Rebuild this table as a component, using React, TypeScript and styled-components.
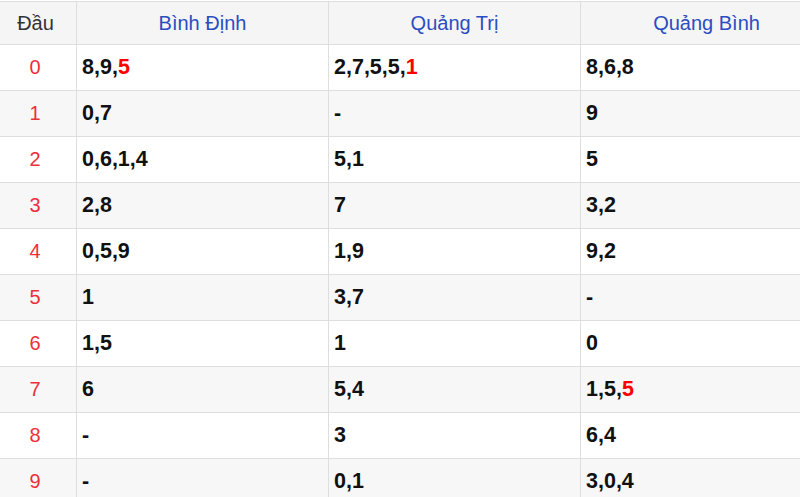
import styled, { createGlobalStyle } from 'styled-components';

const GlobalStyle = createGlobalStyle`
  html, body {
    margin: 0;
    padding: 0;
    background: #ffffff;
    overflow: hidden;
  }
  body {
    font-family: "Liberation Sans", Arial, sans-serif;
  }
`;

type Cell = { text: string; hot?: string };

const rows: Cell[][] = [
  [{ text: '8,9,', hot: '5' }, { text: '2,7,5,5,', hot: '1' }, { text: '8,6,8' }],
  [{ text: '0,7' }, { text: '-' }, { text: '9' }],
  [{ text: '0,6,1,4' }, { text: '5,1' }, { text: '5' }],
  [{ text: '2,8' }, { text: '7' }, { text: '3,2' }],
  [{ text: '0,5,9' }, { text: '1,9' }, { text: '9,2' }],
  [{ text: '1' }, { text: '3,7' }, { text: '-' }],
  [{ text: '1,5' }, { text: '1' }, { text: '0' }],
  [{ text: '6' }, { text: '5,4' }, { text: '1,5,', hot: '5' }],
  [{ text: '-' }, { text: '3' }, { text: '6,4' }],
  [{ text: '-' }, { text: '0,1' }, { text: '3,0,4' }],
];

const provinces = ['Bình Định', 'Quảng Trị', 'Quảng Bình'];

const App = () => {
  return (
    <>
      <GlobalStyle />
      <Table>
        <HeadRow>
          <HeadCell $first>Đầu</HeadCell>
          {provinces.map(p => (
            <HeadCell key={p} $link>{p}</HeadCell>
          ))}
        </HeadRow>
        {rows.map((row, i) => (
          <Row key={i} $striped={i % 2 === 1}>
            <IndexCell>{i}</IndexCell>
            {row.map((c, j) => (
              <DataCell key={j}>
                {c.text}
                {c.hot && <Hot>{c.hot}</Hot>}
              </DataCell>
            ))}
          </Row>
        ))}
      </Table>
    </>
  );
};

export default App;

const Table = styled.div`
  margin-top: 1px;
  width: 832px;
  border-top: 1px solid #dedede;
`;

const HeadRow = styled.div`
  display: grid;
  grid-template-columns: 76px 252px 252px 252px;
  height: 43px;
  background: #f5f5f5;
  border-bottom: 1px solid #dedede;
  box-sizing: border-box;
`;

const Row = styled.div<{ $striped: boolean }>`
  display: grid;
  grid-template-columns: 76px 252px 252px 252px;
  height: 46px;
  box-sizing: border-box;
  background: ${p => (p.$striped ? '#f7f7f7' : '#ffffff')};
  border-bottom: 1px solid #dedede;
`;

const BaseCell = styled.div`
  display: flex;
  align-items: center;
  box-sizing: border-box;
  & + & {
    border-left: 1px solid #dedede;
  }
`;

const HeadCell = styled(BaseCell)<{ $link?: boolean; $first?: boolean }>`
  justify-content: center;
  padding-right: ${p => (p.$first ? '5px' : '0')};
  font-size: 20px;
  color: ${p => (p.$link ? '#2b4dc2' : '#333333')};
`;

const IndexCell = styled(BaseCell)`
  justify-content: center;
  padding-right: 6px;
  font-size: 20px;
  color: #ec2f3b;
`;

const DataCell = styled(BaseCell)`
  padding-left: 5px;
  font-size: 21.5px;
  font-weight: bold;
  color: #111111;
`;

const Hot = styled.span`
  color: #ff0000;
`;
